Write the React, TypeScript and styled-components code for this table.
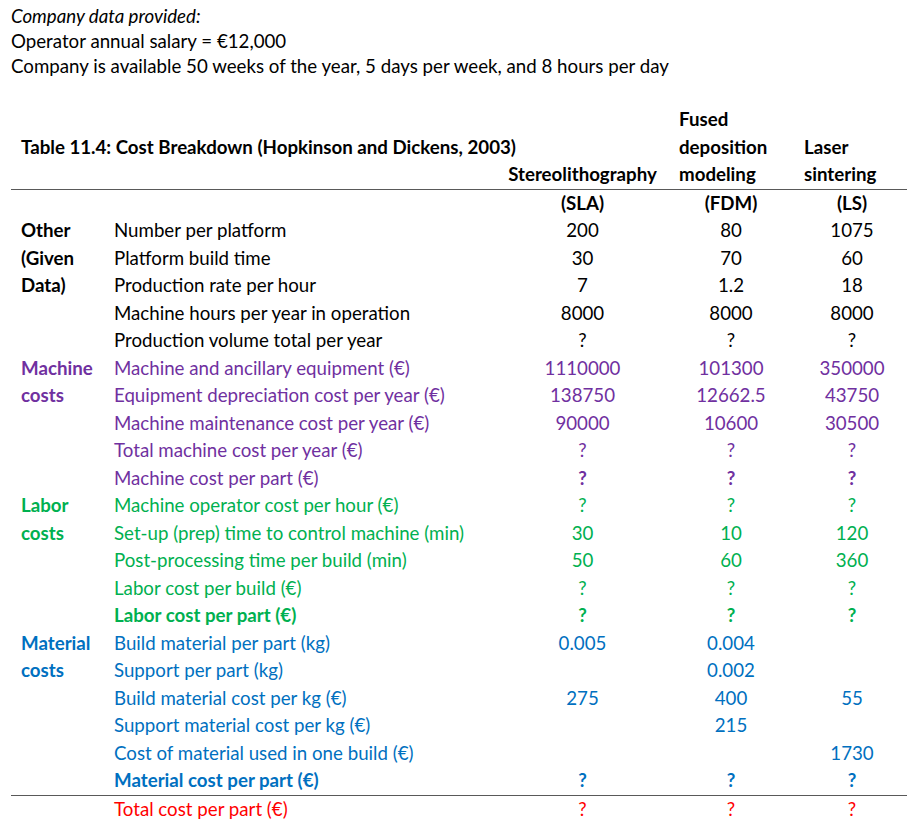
import React from "react";
import styled, { createGlobalStyle } from "styled-components";

const GlobalStyle = createGlobalStyle`
  html, body {
    margin: 0;
    padding: 0;
    background: #ffffff;
  }
  body {
    font-family: Lato, "Open Sans", "Liberation Sans", sans-serif;
    font-size: 18.7px;
    color: #000000;
  }
`;

const COLS = "386px 165px 132px 110px";
const ROW_H = 27.5;

const colors: Record<string, string> = {
  black: "#000000",
  purple: "#7030a0",
  green: "#00b050",
  blue: "#0070c0",
  red: "#ff0000",
};

const Page = styled.div`
  width: 896px;
  padding: 4px 10px 0 11px;
`;

const Intro = styled.div`
  line-height: 25px;
  margin-bottom: 27px;
`;

const IntroLine = styled.div<{ $italic?: boolean }>`
  font-style: ${(p) => (p.$italic ? "italic" : "normal")};
  white-space: nowrap;
`;

const Header = styled.div`
  display: grid;
  grid-template-columns: 489px 165px 132px 110px;
  line-height: ${ROW_H}px;
  font-weight: 700;
  border-bottom: 1.5px solid #595959;
`;

const Title = styled.div`
  align-self: center;
  padding-left: 10px;
  white-space: nowrap;
`;

const ColHead = styled.div<{ $align: "center" | "left"; $pad?: number }>`
  align-self: end;
  text-align: ${(p) => p.$align};
  padding-left: ${(p) => p.$pad || 0}px;
  white-space: nowrap;
`;

const Section = styled.div<{ $tone: string; $rule?: boolean }>`
  display: grid;
  grid-template-columns: 103px 1fr;
  color: ${(p) => colors[p.$tone]};
  border-bottom: ${(p) => (p.$rule ? "1.5px solid #595959" : "none")};
`;

const Category = styled.div`
  padding-left: 10px;
  font-weight: 700;
  line-height: ${ROW_H}px;
  white-space: nowrap;
`;

const Rows = styled.div`
  display: flex;
  flex-direction: column;
`;

const Row = styled.div<{ $bold?: boolean }>`
  display: grid;
  grid-template-columns: ${COLS};
  height: ${ROW_H}px;
  line-height: ${ROW_H}px;
  font-weight: ${(p) => (p.$bold ? 700 : 400)};
`;

const Label = styled.div`
  white-space: nowrap;
`;

const Value = styled.div<{ $bold?: boolean }>`
  text-align: center;
  font-weight: ${(p) => (p.$bold ? 700 : "inherit")};
`;

type RowData = {
  label: string;
  values: string[];
  bold?: boolean;
  boldValues?: boolean;
};

type SectionData = {
  tone: string;
  category: string[];
  rule?: boolean;
  rows: RowData[];
};

const sections: SectionData[] = [
  {
    tone: "black",
    category: [],
    rows: [{ label: "", values: ["(SLA)", "(FDM)", "(LS)"], boldValues: true }],
  },
  {
    tone: "black",
    category: ["Other", "(Given", "Data)"],
    rows: [
      { label: "Number per platform", values: ["200", "80", "1075"] },
      { label: "Platform build time", values: ["30", "70", "60"] },
      { label: "Production rate per hour", values: ["7", "1.2", "18"] },
      { label: "Machine hours per year in operation", values: ["8000", "8000", "8000"] },
      { label: "Production volume total per year", values: ["?", "?", "?"] },
    ],
  },
  {
    tone: "purple",
    category: ["Machine", "costs"],
    rows: [
      { label: "Machine and ancillary equipment (€)", values: ["1110000", "101300", "350000"] },
      { label: "Equipment depreciation cost per year (€)", values: ["138750", "12662.5", "43750"] },
      { label: "Machine maintenance cost per year (€)", values: ["90000", "10600", "30500"] },
      { label: "Total machine cost per year (€)", values: ["?", "?", "?"] },
      { label: "Machine cost per part (€)", values: ["?", "?", "?"], boldValues: true },
    ],
  },
  {
    tone: "green",
    category: ["Labor", "costs"],
    rows: [
      { label: "Machine operator cost per hour (€)", values: ["?", "?", "?"] },
      { label: "Set-up (prep) time to control machine (min)", values: ["30", "10", "120"] },
      { label: "Post-processing time per build (min)", values: ["50", "60", "360"] },
      { label: "Labor cost per build (€)", values: ["?", "?", "?"] },
      { label: "Labor cost per part (€)", values: ["?", "?", "?"], bold: true },
    ],
  },
  {
    tone: "blue",
    category: ["Material", "costs"],
    rule: true,
    rows: [
      { label: "Build material per part (kg)", values: ["0.005", "0.004", ""] },
      { label: "Support per part (kg)", values: ["", "0.002", ""] },
      { label: "Build material cost per kg (€)", values: ["275", "400", "55"] },
      { label: "Support material cost per kg (€)", values: ["", "215", ""] },
      { label: "Cost of material used in one build (€)", values: ["", "", "1730"] },
      { label: "Material cost per part (€)", values: ["?", "?", "?"], bold: true },
    ],
  },
  {
    tone: "red",
    category: [],
    rows: [{ label: "Total cost per part (€)", values: ["?", "?", "?"] }],
  },
];

const App: React.FC = () => {
  return (
    <>
      <GlobalStyle />
      <Page>
        <Intro>
          <IntroLine $italic>Company data provided:</IntroLine>
          <IntroLine>Operator annual salary = €12,000</IntroLine>
          <IntroLine>
            Company is available 50 weeks of the year, 5 days per week, and 8 hours per day
          </IntroLine>
        </Intro>

        <Header>
          <Title>Table 11.4: Cost Breakdown (Hopkinson and Dickens, 2003)</Title>
          <ColHead $align="center">Stereolithography</ColHead>
          <ColHead $align="left" $pad={14}>
            Fused
            <br />
            deposition
            <br />
            modeling
          </ColHead>
          <ColHead $align="left" $pad={7}>
            Laser
            <br />
            sintering
          </ColHead>
        </Header>

        {sections.map((s, i) => (
          <Section key={i} $tone={s.tone} $rule={s.rule}>
            <Category>
              {s.category.map((c, j) => (
                <div key={j}>{c}</div>
              ))}
            </Category>
            <Rows>
              {s.rows.map((r, j) => (
                <Row key={j} $bold={r.bold}>
                  <Label>{r.label}</Label>
                  {r.values.map((v, k) => (
                    <Value key={k} $bold={r.boldValues}>
                      {v}
                    </Value>
                  ))}
                </Row>
              ))}
            </Rows>
          </Section>
        ))}
      </Page>
    </>
  );
};

export default App;
